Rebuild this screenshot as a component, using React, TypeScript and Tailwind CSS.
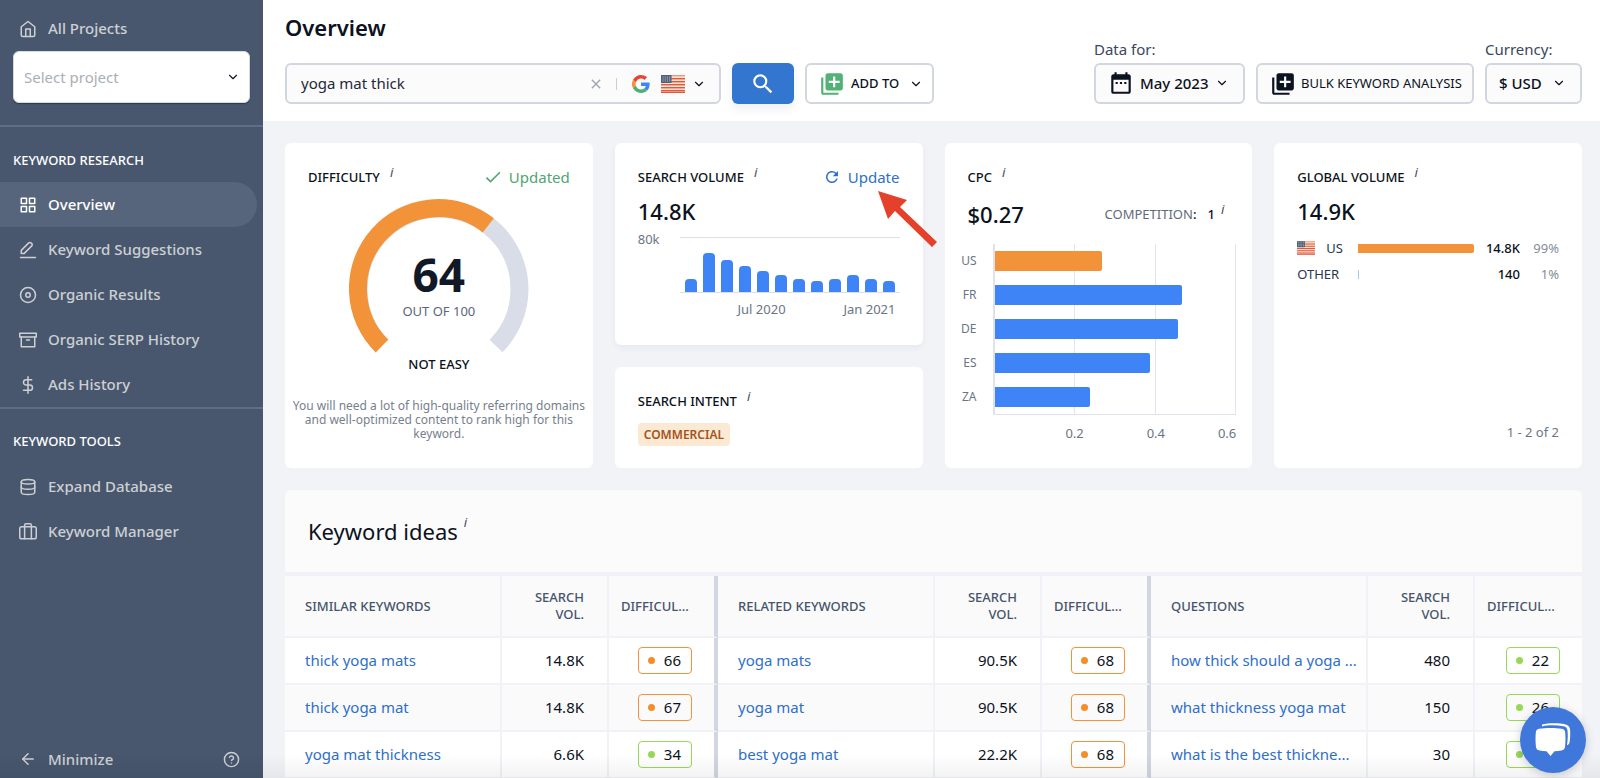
import React from "react";
import {
  FiArchive,
  FiArrowLeft,
  FiChevronDown,
  FiDatabase,
  FiDisc,
  FiDollarSign,
  FiGrid,
  FiHelpCircle,
  FiHome,
} from "react-icons/fi";
import {
  MdCheck,
  MdClose,
  MdDateRange,
  MdLibraryAdd,
  MdRefresh,
  MdSearch,
} from "react-icons/md";

type Tone = "orange" | "green";

interface KeywordRow {
  keyword: string;
  volume: string;
  difficulty: number;
  tone: Tone;
}

interface NavItem {
  label: string;
  icon: React.ReactNode;
  active?: boolean;
}

const PenIcon = () => (
  <svg
    width="18"
    height="18"
    viewBox="0 0 24 24"
    fill="none"
    stroke="currentColor"
    strokeWidth="2"
    strokeLinecap="round"
    strokeLinejoin="round"
  >
    <path d="M13 2.500a2.100 2.100 0 0 1 3 0l1 1a2.100 2.100 0 0 1 0 3L7 16.500H3V12.500Z" />
    <path d="M2 22h20" />
  </svg>
);

const BriefcaseIcon = () => (
  <svg
    width="18"
    height="18"
    viewBox="0 0 24 24"
    fill="none"
    stroke="currentColor"
    strokeWidth="2"
    strokeLinecap="round"
    strokeLinejoin="round"
  >
    <rect x="1" y="5" width="22" height="16" rx="2.5" />
    <path d="M7.5 21V3a2 2 0 0 1 2-2h5a2 2 0 0 1 2 2v18" />
  </svg>
);

const GoogleIcon = () => (
  <svg width="18" height="18" viewBox="0 0 48 48" aria-label="Google">
    <path
      fill="#ea4335"
      d="M24 9.5c3.5 0 6.7 1.2 9.2 3.6l6.9-6.9C35.9 2.4 30.5 0 24 0 14.6 0 6.5 5.4 2.6 13.2l8 6.2C12.4 13.7 17.7 9.5 24 9.5z"
    />
    <path
      fill="#4285f4"
      d="M47 24.6c0-1.6-.2-3.1-.4-4.6H24v9h12.9c-.6 3-2.2 5.5-4.7 7.2l7.7 6C44.4 38 47 31.8 47 24.6z"
    />
    <path fill="#f29339" d="M10.5 28.6a14.5 14.5 0 0 1 0-9.2l-8-6.2a24 24 0 0 0 0 21.6z" />
    <path
      fill="#4caf73"
      d="M24 48c6.5 0 11.9-2.1 15.9-5.8l-7.7-6c-2.2 1.5-4.9 2.3-8.2 2.3-6.3 0-11.6-4.2-13.5-9.9l-8 6.2C6.5 42.6 14.6 48 24 48z"
    />
  </svg>
);

const UsFlag = ({ className }: { className?: string }) => (
  <svg viewBox="0 0 24 18" className={className} aria-label="United States">
    <rect width="24" height="18" rx="1" fill="#fbe3d3" />
    {[0, 3, 6, 9, 12, 15].map((y) => (
      <rect key={y} y={y} width="24" height="1.4" fill={y < 3 ? "#ee9a76" : "#e2563c"} />
    ))}
    <rect y="16.8" width="24" height="1.2" fill="#e2563c" />
    <rect width="10.5" height="8" fill="#4f5f78" />
    {[1.5, 3.5, 5.5].map((y) =>
      [1.5, 3.7, 5.9, 8.1].map((x) => (
        <rect key={`${x}-${y}`} x={x} y={y} width="1" height="1" fill="#c3cad4" />
      ))
    )}
  </svg>
);

const researchItems: NavItem[] = [
  { label: "Overview", icon: <FiGrid size={18} />, active: true },
  { label: "Keyword Suggestions", icon: <PenIcon /> },
  { label: "Organic Results", icon: <FiDisc size={18} /> },
  { label: "Organic SERP History", icon: <FiArchive size={18} /> },
  { label: "Ads History", icon: <FiDollarSign size={18} /> },
];

const toolItems: NavItem[] = [
  { label: "Expand Database", icon: <FiDatabase size={18} /> },
  { label: "Keyword Manager", icon: <BriefcaseIcon /> },
];

const volumeBars = [13, 39, 32, 26, 21, 17, 13, 11, 13, 17, 13, 11];

const cpcBars = [
  { country: "US", width: 44.5, color: "bg-[#f29339]" },
  { country: "FR", width: 77.5, color: "bg-[#3f84f6]" },
  { country: "DE", width: 76, color: "bg-[#3f84f6]" },
  { country: "ES", width: 64.5, color: "bg-[#3f84f6]" },
  { country: "ZA", width: 39.5, color: "bg-[#3f84f6]" },
];

const ideaTitles = ["SIMILAR KEYWORDS", "RELATED KEYWORDS", "QUESTIONS"];

const ideaRows: KeywordRow[][] = [
  [
    { keyword: "thick yoga mats", volume: "14.8K", difficulty: 66, tone: "orange" },
    { keyword: "yoga mats", volume: "90.5K", difficulty: 68, tone: "orange" },
    { keyword: "how thick should a yoga ...", volume: "480", difficulty: 22, tone: "green" },
  ],
  [
    { keyword: "thick yoga mat", volume: "14.8K", difficulty: 67, tone: "orange" },
    { keyword: "yoga mat", volume: "90.5K", difficulty: 68, tone: "orange" },
    { keyword: "what thickness yoga mat", volume: "150", difficulty: 26, tone: "green" },
  ],
  [
    { keyword: "yoga mat thickness", volume: "6.6K", difficulty: 34, tone: "green" },
    { keyword: "best yoga mat", volume: "22.2K", difficulty: 68, tone: "orange" },
    { keyword: "what is the best thickne...", volume: "30", difficulty: 22, tone: "green" },
  ],
];

const InfoMark = () => (
  <span className="self-start text-[13px] italic leading-[10px] text-[#3f4c61]">i</span>
);

const CardTitle = ({ children }: { children: React.ReactNode }) => (
  <div className="flex h-5 items-center gap-2.5">
    <h2 className="text-[13px] font-medium leading-5">{children}</h2>
    <InfoMark />
  </div>
);

const NavList = ({ items }: { items: NavItem[] }) => (
  <ul>
    {items.map((item) => (
      <li key={item.label}>
        <a
          href="#"
          className={`mr-1.5 flex h-[45px] items-center gap-[11px] rounded-r-full pl-[19px] text-[15px] font-medium ${
            item.active ? "bg-[#56657b] text-white" : "text-[#cdd0d3]"
          }`}
        >
          {item.icon}
          {item.label}
        </a>
      </li>
    ))}
  </ul>
);

const Sidebar = () => (
  <aside className="flex w-[263px] shrink-0 flex-col bg-[#48576e] text-[#cdd0d3]">
    <a
      href="#"
      className="flex h-[51px] items-center gap-[11px] pb-1 pl-[19px] pt-2.5 text-[15px] font-medium"
    >
      <FiHome size={18} />
      All Projects
    </a>
    <div className="relative mx-[13px]">
      <select
        aria-label="Select project"
        className="h-[52px] w-full appearance-none rounded-md border border-[#d6dbe2] bg-white pl-2.5 text-[15px] text-[#a9afb8] shadow-[0_1px_1px_#2c3a50]"
      >
        <option>Select project</option>
      </select>
      <FiChevronDown
        size={14}
        className="pointer-events-none absolute right-2.5 top-[19px] text-[#111827]"
      />
    </div>
    <nav>
      <div className="mt-[22px] border-t-2 border-[#5f6e84]">
        <h2 className="flex h-[55px] items-center pl-[13px] pt-3 text-[13px] font-medium text-white">
          KEYWORD RESEARCH
        </h2>
        <NavList items={researchItems} />
      </div>
      <div className="border-t-2 border-[#5f6e84]">
        <h2 className="flex h-[55px] items-center pl-[13px] pt-2.5 text-[13px] font-medium text-white">
          KEYWORD TOOLS
        </h2>
        <NavList items={toolItems} />
      </div>
    </nav>
    <div className="mt-auto flex h-[38px] items-center justify-between pl-[19px] pr-[23px]">
      <button className="flex items-center gap-[11px] text-[15px] font-medium">
        <FiArrowLeft size={18} />
        Minimize
      </button>
      <button aria-label="Help">
        <FiHelpCircle size={17} />
      </button>
    </div>
  </aside>
);

const Header = () => (
  <header className="flex items-end justify-between bg-white pb-[17px] pl-[22px] pr-[18px] pt-[13px]">
    <div className="flex flex-col gap-[22px]">
      <h1 className="text-[22px] font-semibold leading-7">Overview</h1>
      <div className="flex h-[41px] gap-[11px]">
        <div className="flex w-[436px] items-center rounded-md border-2 border-[#d1d6e0] bg-[#fbfbfc] pl-[14px] pr-[13px]">
          <input
            type="text"
            aria-label="Keyword"
            defaultValue="yoga mat thick"
            className="min-w-0 flex-1 bg-transparent text-[15px] text-[#1f2937] outline-none"
          />
          <button aria-label="Clear" className="text-[#9ca3af]">
            <MdClose size={16} />
          </button>
          <span className="ml-3 mr-[15px] h-3 w-px bg-[#c9ced8]" />
          <button aria-label="Search engine and location" className="flex items-center">
            <GoogleIcon />
            <UsFlag className="ml-[11px] mr-[7px] h-[18px] w-6" />
            <FiChevronDown size={14} />
          </button>
        </div>
        <button
          aria-label="Search"
          className="flex w-[62px] items-center justify-center rounded-md bg-[#3276cf] text-white shadow-[0_5px_10px_rgba(30,50,90,0.08)]"
        >
          <MdSearch size={26} />
        </button>
        <button className="flex w-[129px] items-center rounded-md border-2 border-[#d1d6e0] bg-white pl-3 text-[13px] font-medium">
          <MdLibraryAdd size={26} className="text-[#52b174]" />
          <span className="ml-1.5 mr-2.5">ADD TO</span>
          <FiChevronDown size={14} />
        </button>
      </div>
    </div>
    <div className="flex items-end gap-[11px]">
      <div className="flex flex-col gap-1">
        <label htmlFor="period" className="text-[15px] leading-5 text-[#3a475c]">
          Data for:
        </label>
        <div className="relative">
          <MdDateRange
            size={26}
            className="pointer-events-none absolute left-[14px] top-[7px]"
          />
          <select
            id="period"
            className="h-[41px] w-[151px] appearance-none rounded-md border-2 border-[#d1d6e0] bg-[#fbfbfc] pl-11 text-[15px] font-medium"
          >
            <option>May 2023</option>
          </select>
          <FiChevronDown
            size={14}
            className="pointer-events-none absolute right-4 top-[13px]"
          />
        </div>
      </div>
      <button className="flex h-[41px] w-[218px] items-center gap-[5px] whitespace-nowrap rounded-md border-2 border-[#d1d6e0] bg-[#fbfbfc] pl-3 text-[13px]">
        <MdLibraryAdd size={26} />
        BULK KEYWORD ANALYSIS
      </button>
      <div className="flex flex-col gap-1">
        <label htmlFor="currency" className="text-[15px] leading-5 text-[#3a475c]">
          Currency:
        </label>
        <div className="relative">
          <select
            id="currency"
            className="h-[41px] w-[97px] appearance-none rounded-md border-2 border-[#d1d6e0] bg-[#fbfbfc] pl-3 text-[15px] font-medium"
          >
            <option>$ USD</option>
          </select>
          <FiChevronDown
            size={14}
            className="pointer-events-none absolute right-4 top-[13px]"
          />
        </div>
      </div>
    </div>
  </header>
);

const DifficultyCard = () => (
  <section className="flex flex-col rounded-md bg-white pt-6">
    <div className="flex items-center justify-between px-[23px]">
      <CardTitle>DIFFICULTY</CardTitle>
      <span className="flex items-center gap-1.5 text-[15px] leading-5 text-[#52a573]">
        <MdCheck size={20} />
        Updated
      </span>
    </div>
    <div className="mt-3 grid justify-items-center">
      <svg
        width="180"
        height="154"
        viewBox="-90 -90 180 154"
        fill="none"
        strokeWidth="18"
        className="col-start-1 row-start-1"
      >
        <path d="M-57 57A80.5 80.5 0 1 1 57 57" stroke="#d9dde8" />
        <path d="M-57 57A80.5 80.5 0 0 1 49.3 -63.6" stroke="#f29339" />
      </svg>
      <div className="col-start-1 row-start-1 pt-12 text-center">
        <div className="text-[46px] font-bold leading-[54px] text-[#111827]">64</div>
        <div className="text-[13px] leading-5 text-[#5a6678]">OUT OF 100</div>
      </div>
    </div>
    <div className="mt-px text-center text-[13px] font-medium leading-5">NOT EASY</div>
    <p className="mx-1 mt-[25px] text-center text-[12px] leading-[14px] text-[#77808e]">
      You will need a lot of high-quality referring domains and well-optimized content to rank
      high for this keyword.
    </p>
  </section>
);

const SearchVolumeCard = () => (
  <section className="flex h-[202px] flex-col rounded-md bg-white px-[23px] pt-6 shadow-[0_3px_6px_rgba(30,50,90,0.05)]">
    <div className="flex items-center justify-between">
      <CardTitle>SEARCH VOLUME</CardTitle>
      <button className="relative flex items-center gap-[7px] text-[15px] leading-5 text-[#2f6fc9]">
        <MdRefresh size={18} />
        Update
        <svg
          width="60"
          height="58"
          viewBox="0 0 60 58"
          className="pointer-events-none absolute left-[54px] top-[23px] z-10"
        >
          <path d="M1 1L30 10L23 17L60 52L55 57L18 21L11 29Z" fill="#e5402a" />
        </svg>
      </button>
    </div>
    <div className="mt-2.5 text-[22px] font-medium leading-7">14.8K</div>
    <div className="mt-1 flex justify-between text-[13px] text-[#6b7585]">
      <span className="leading-5">80k</span>
      <div className="mt-2 w-[220px]">
        <div className="flex h-[56px] items-end justify-between border-y border-[#dcdfe6] px-[5px]">
          {volumeBars.map((height, i) => (
            <div key={i} className="w-3 rounded-t bg-[#3f84f6]" style={{ height }} />
          ))}
        </div>
        <div className="mt-1.5 flex justify-between pl-[58px] pr-1 leading-5">
          <span>Jul 2020</span>
          <span>Jan 2021</span>
        </div>
      </div>
    </div>
  </section>
);

const SearchIntentCard = () => (
  <section className="flex h-[101px] flex-col items-start rounded-md bg-white px-[23px] pt-6">
    <CardTitle>SEARCH INTENT</CardTitle>
    <span className="mt-3 rounded bg-[#fce9d4] px-1.5 text-[12px] font-semibold leading-[23px] text-[#a3531b]">
      COMMERCIAL
    </span>
  </section>
);

const CpcCard = () => (
  <section className="flex flex-col rounded-md bg-white pt-6">
    <div className="px-[23px]">
      <CardTitle>CPC</CardTitle>
    </div>
    <div className="mt-[13px] flex items-center justify-between pl-[23px] pr-7">
      <span className="text-[22px] font-medium leading-7">$0.27</span>
      <span className="flex h-5 text-[13px] leading-5">
        <span className="text-[#5f6b7d]">COMPETITION</span>
        <span className="font-medium">:</span>
        <span className="ml-[11px] mr-1.5 font-medium">1</span>
        <InfoMark />
      </span>
    </div>
    <div className="mt-4 flex gap-4 pr-4">
      <div className="flex w-8 flex-col text-right text-[12px] text-[#6b7585]">
        {cpcBars.map((bar) => (
          <span key={bar.country} className="h-[34px] leading-[34px]">
            {bar.country}
          </span>
        ))}
      </div>
      <div className="min-w-0 flex-1">
        <div className="relative border-b border-l-2 border-[#dfe2ea]">
          <div className="absolute inset-0 grid grid-cols-3">
            <div className="border-r border-[#e3e5ea]" />
            <div className="border-r border-[#e3e5ea]" />
            <div className="border-r border-[#e3e5ea]" />
          </div>
          <div className="relative">
            {cpcBars.map((bar) => (
              <div key={bar.country} className="flex h-[34px] items-center">
                <div
                  className={`h-5 rounded-r-xs ${bar.color}`}
                  style={{ width: `${bar.width}%` }}
                />
              </div>
            ))}
          </div>
        </div>
        <div className="mt-2 grid grid-cols-3 text-[13px] leading-5 text-[#6b7585]">
          <span className="-mr-2.5 text-right">0.2</span>
          <span className="-mr-2.5 text-right">0.4</span>
          <span className="text-right">0.6</span>
        </div>
      </div>
    </div>
  </section>
);

const GlobalVolumeCard = () => (
  <section className="flex flex-col rounded-md bg-white px-[23px] pt-6">
    <CardTitle>GLOBAL VOLUME</CardTitle>
    <div className="mt-2.5 text-[22px] font-medium leading-7">14.9K</div>
    <table className="mt-2.5 w-full table-fixed text-[13px] leading-5">
      <colgroup>
        <col className="w-[61px]" />
        <col />
        <col className="w-[46px]" />
        <col className="w-[39px]" />
      </colgroup>
      <tbody>
        <tr className="h-[26px]">
          <th scope="row" className="text-left font-normal text-[#2b374b]">
            <span className="flex items-center gap-[11px]">
              <UsFlag className="h-[14px] w-[18px]" />
              US
            </span>
          </th>
          <td>
            <div className="h-[9px] w-full rounded-r-xs bg-[#f29339]" />
          </td>
          <td className="text-right font-medium">14.8K</td>
          <td className="text-right text-[#858d99]">99%</td>
        </tr>
        <tr className="h-[26px]">
          <th scope="row" className="text-left font-normal text-[#2b374b]">
            OTHER
          </th>
          <td>
            <div className="h-[9px] w-px bg-[#a9c8fa]" />
          </td>
          <td className="text-right font-medium">140</td>
          <td className="text-right text-[#858d99]">1%</td>
        </tr>
      </tbody>
    </table>
    <div className="mb-[26px] mt-auto text-right text-[13px] leading-5 text-[#6b7585]">
      1 - 2 of 2
    </div>
  </section>
);

const DifficultyBadge = ({ value, tone }: { value: number; tone: Tone }) => (
  <span
    className={`ml-auto flex h-[27px] w-[54px] items-center justify-between rounded border pl-[9px] pr-2.5 text-[15px] ${
      tone === "orange" ? "border-[#f29339]" : "border-[#97d957]"
    }`}
  >
    <span
      className={`size-[7px] rounded-full ${
        tone === "orange" ? "bg-[#f28f2c]" : "bg-[#97d957]"
      }`}
    />
    {value}
  </span>
);

const KeywordIdeas = () => (
  <section className="mt-[22px] overflow-hidden rounded-t-md">
    <div className="flex h-[86px] items-center border-b-4 border-[#f1f2f7] bg-[#fbfbfc] pl-[23px]">
      <div className="flex gap-1.5">
        <h2 className="text-[22px] leading-7">Keyword ideas</h2>
        <InfoMark />
      </div>
    </div>
    <table className="w-full table-fixed border-separate border-spacing-0">
      <colgroup>
        <col />
        <col className="w-[107px]" />
        <col className="w-[109px]" />
        <col />
        <col className="w-[107px]" />
        <col className="w-[109px]" />
        <col />
        <col className="w-[107px]" />
        <col className="w-[107px]" />
      </colgroup>
      <thead>
        <tr className="h-[62px] bg-[#fafafb] text-[13px] leading-[17px] text-[#46546a]">
          {ideaTitles.map((title, i) => (
            <React.Fragment key={title}>
              <th className="border-b-2 border-r-2 border-[#f1f2f7] pl-5 text-left font-medium">
                {title}
              </th>
              <th className="border-b-2 border-r-2 border-[#f1f2f7] pl-5 pr-[23px] text-right font-medium">
                SEARCH VOL.
              </th>
              <th
                className={`border-b-2 border-b-[#f1f2f7] pl-3 text-left font-medium ${
                  i < 2 ? "border-r-4 border-r-[#d1d6e1]" : ""
                }`}
              >
                DIFFICUL...
              </th>
            </React.Fragment>
          ))}
        </tr>
      </thead>
      <tbody>
        {ideaRows.map((row, r) => (
          <tr key={r} className={`h-[47px] text-[15px] ${r % 2 ? "bg-[#fafafb]" : "bg-white"}`}>
            {row.map((idea, i) => (
              <React.Fragment key={idea.keyword}>
                <td className="truncate border-b-2 border-r-2 border-[#f1f2f7] pl-5">
                  <a href="#" className="text-[#2f6fc9]">
                    {idea.keyword}
                  </a>
                </td>
                <td className="border-b-2 border-r-2 border-[#f1f2f7] pr-[23px] text-right">
                  {idea.volume}
                </td>
                <td
                  className={`border-b-2 border-b-[#f1f2f7] pr-[22px] ${
                    i < 2 ? "border-r-4 border-r-[#d1d6e1]" : ""
                  }`}
                >
                  <DifficultyBadge value={idea.difficulty} tone={idea.tone} />
                </td>
              </React.Fragment>
            ))}
          </tr>
        ))}
      </tbody>
    </table>
  </section>
);

const ChatButton = () => (
  <button
    aria-label="Open chat"
    className="fixed bottom-[5px] right-[14px] flex size-[66px] items-center justify-center rounded-full bg-[#4077db] shadow-[0_2px_10px_rgba(0,0,0,0.2)]"
  >
    <svg width="36" height="34" viewBox="0 0 36 34" fill="#ffffff">
      <path d="M7 1.5C13 0 24 0 30 1.2C33 1.8 34.6 3.5 35 6C35.5 11 35.2 16 34.5 19.5C34.2 21 33.2 22 32 22.3C32.8 17 33 12 32.5 7.5C32.2 5 31 3.6 28.5 3.2C21 2 13 2 7 3.4Z" />
      <path d="M4 5.8C11 4.6 20 4.6 27 5.8C29 6.2 30 7.4 30.2 9.5C30.6 14 30.6 19 30 24C29.7 26 28.5 27.2 26.5 27.5C24.5 27.8 22 28 19.5 28.2L15.5 33L11.5 28.2C9 28 6.5 27.8 4.5 27.5C2.5 27.2 1.2 26 1 24C0.4 19 0.4 14 0.8 9.5C1 7.4 2 6.2 4 5.8Z" />
    </svg>
  </button>
);

const App: React.FC = () => {
  return (
    <div className="flex h-screen overflow-hidden bg-[#f2f3f7] font-['Noto_Sans',sans-serif] text-[#0b1220]">
      <Sidebar />
      <div className="min-w-0 flex-1">
        <Header />
        <main className="pb-6 pl-[22px] pr-[18px] pt-[22px]">
          <div className="grid grid-cols-4 gap-[22px]">
            <DifficultyCard />
            <div className="flex flex-col gap-[22px]">
              <SearchVolumeCard />
              <SearchIntentCard />
            </div>
            <CpcCard />
            <GlobalVolumeCard />
          </div>
          <KeywordIdeas />
        </main>
      </div>
      <div className="pointer-events-none fixed inset-x-0 bottom-0 h-6 bg-linear-to-t from-black/5 to-transparent" />
      <ChatButton />
    </div>
  );
};

export default App;
